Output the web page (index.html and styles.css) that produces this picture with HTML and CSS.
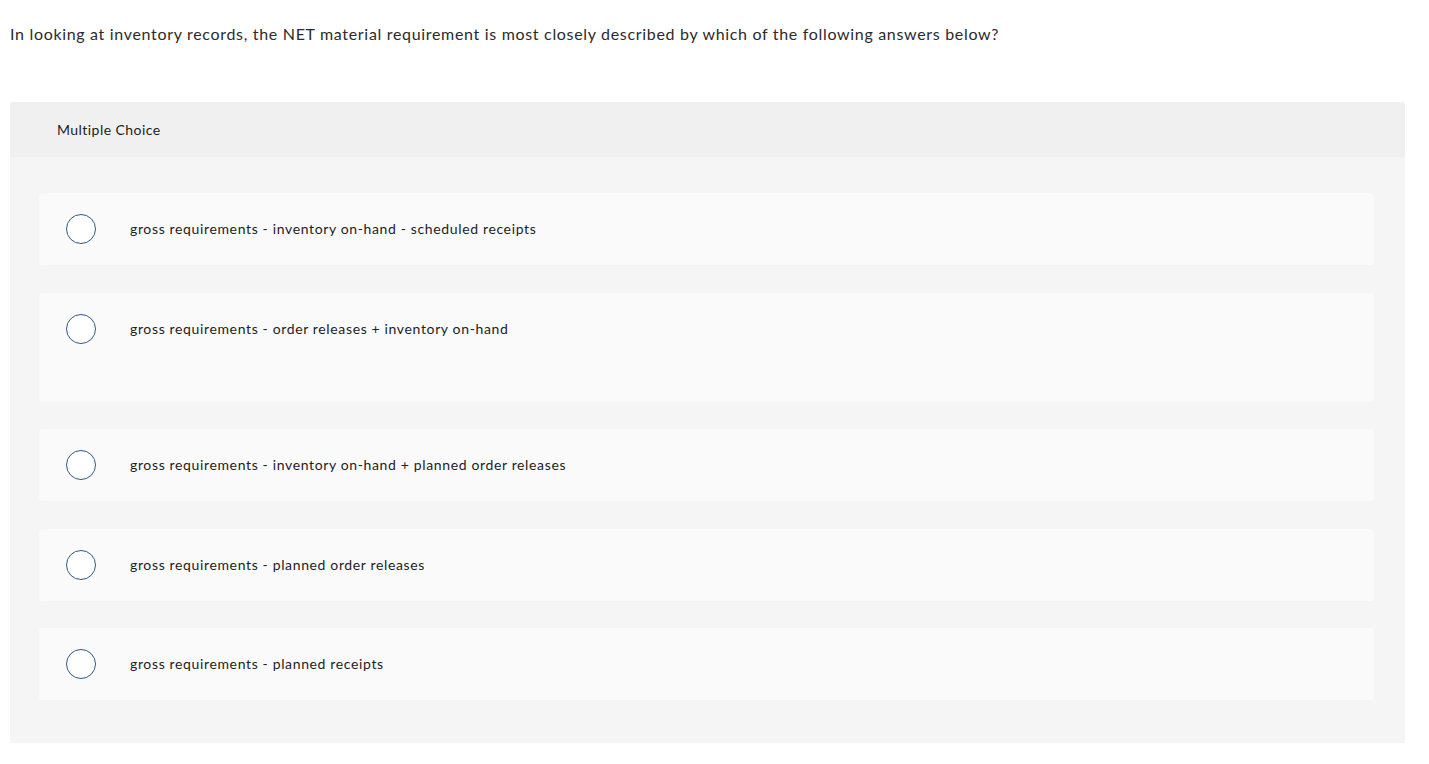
FILE: index.html
```html
<!DOCTYPE html>
<html>
<head>
<meta charset="utf-8">
<link rel="stylesheet" href="styles.css">
</head>
<body>
<p class="question">In looking at inventory records, the NET material requirement is most closely described by which of the following answers below?</p>
<div class="panel">
  <div class="panel-head">Multiple Choice</div>
  <div class="panel-body">
    <div class="option"><span class="radio"></span><span class="label">gross requirements - inventory on-hand - scheduled receipts</span></div>
    <div class="option tall"><span class="radio"></span><span class="label">gross requirements - order releases + inventory on-hand</span></div>
    <div class="option"><span class="radio"></span><span class="label">gross requirements - inventory on-hand + planned order releases</span></div>
    <div class="option"><span class="radio"></span><span class="label">gross requirements - planned order releases</span></div>
    <div class="option"><span class="radio"></span><span class="label">gross requirements - planned receipts</span></div>
  </div>
</div>
</body>
</html>
```
FILE: styles.css
```css
html, body {
  margin: 0;
  padding: 0;
  background: #ffffff;
}
body {
  font-family: Lato, "Liberation Sans", sans-serif;
  color: #222;
}
.question {
  margin: 0;
  padding: 24px 0 0 10px;
  font-size: 16px;
  line-height: 20px;
  letter-spacing: 0.68px;
  color: #2b2b2b;
}
.panel {
  margin: 58px 24px 0 10px;
  width: 1395px;
  background: #f5f5f5;
  border-radius: 3px 3px 0 0;
}
.panel-head {
  height: 55px;
  background: #f0f0f0;
  border-radius: 3px 3px 0 0;
  display: flex;
  align-items: center;
  padding-left: 47px;
  font-size: 14px;
  letter-spacing: 0.45px;
  color: #1d1d1d;
}
.panel-body {
  padding: 36px 31px 43px 29px;
  display: flex;
  flex-direction: column;
  gap: 27.5px;
}
.option {
  background: #fafafa;
  border-radius: 4px;
  min-height: 72px;
  box-sizing: border-box;
  padding: 21px 0 0 27px;
  display: flex;
  align-items: flex-start;
}
.option.tall {
  min-height: 109px;
}
.radio {
  flex: none;
  width: 28px;
  height: 28px;
  border: 1.5px solid #2c5a88;
  border-radius: 50%;
  background: #fff;
}
.label {
  margin-left: 34px;
  font-size: 14px;
  line-height: 30px;
  letter-spacing: 0.64px;
  color: #1d1d1d;
}
```
